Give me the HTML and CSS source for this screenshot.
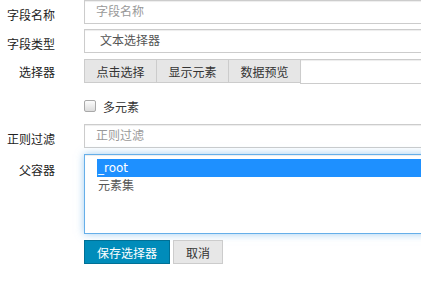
FILE: index.html
```html
<!DOCTYPE html>
<html lang="zh-CN">
<head>
    <meta charset="UTF-8">
    <meta name="viewport" content="width=device-width, initial-scale=1.0">
    <title>选择器编辑</title>
    <link rel="stylesheet" href="styles.css">
</head>
<body>
    <form class="selector-form">
        <div class="row row-first">
            <label class="row-label" for="fieldName">字段名称</label>
            <div class="row-field">
                <input class="text-input" id="fieldName" type="text" placeholder="字段名称">
            </div>
        </div>
        <div class="row row-second">
            <label class="row-label" for="fieldType">字段类型</label>
            <div class="row-field">
                <select class="text-input type-select" id="fieldType">
                    <option>文本选择器</option>
                </select>
            </div>
        </div>
        <div class="row">
            <label class="row-label row-label-tight">选择器</label>
            <div class="row-field btn-group">
                <button type="button" class="tab-btn">点击选择</button>
                <button type="button" class="tab-btn">显示元素</button>
                <button type="button" class="tab-btn">数据预览</button>
                <input class="text-input group-input" type="text">
            </div>
        </div>
        <div class="row row-check">
            <span class="row-label"></span>
            <label class="row-field check-label">
                <input type="checkbox" class="check-box">
                <span>多元素</span>
            </label>
        </div>
        <div class="row">
            <label class="row-label" for="regex">正则过滤</label>
            <div class="row-field">
                <input class="text-input" id="regex" type="text" placeholder="正则过滤">
            </div>
        </div>
        <div class="row">
            <label class="row-label row-label-low">父容器</label>
            <div class="row-field">
                <div class="parent-list">
                    <div class="parent-option selected">_root</div>
                    <div class="parent-option">元素集</div>
                </div>
            </div>
        </div>
        <div class="row">
            <span class="row-label"></span>
            <div class="row-field actions">
                <button type="button" class="btn btn-primary">保存选择器</button>
                <button type="button" class="btn btn-default">取消</button>
            </div>
        </div>
    </form>
</body>
</html>
```

FILE: styles.css
```css
html, body {
    overflow: hidden;
}
body {
    margin: 0;
    background: #fff;
    color: #333;
    font-family: "DejaVu Sans", "Noto Sans CJK SC", sans-serif;
    font-size: 12px;
}
.selector-form {
    width: 640px;
}
.row {
    display: grid;
    grid-template-columns: 55px 1fr;
    column-gap: 29px;
    align-items: start;
    margin-top: 6px;
}
.row-first {
    margin-top: 0;
}
.row-second {
    margin-top: 5px;
}
.row-label {
    box-sizing: border-box;
    height: 24px;
    text-align: right;
    padding-top: 8px;
    line-height: 16px;
    color: #222;
}
.row-label-tight {
    padding-top: 6px;
}
.row-label-low {
    padding-top: 9px;
    height: auto;
}
.row-field {
    display: flex;
    min-width: 0;
}
.text-input {
    box-sizing: border-box;
    width: 100%;
    height: 24px;
    padding: 0 11px;
    border: 1px solid #ccc;
    border-radius: 0;
    background: #fff;
    color: #555;
    font-family: inherit;
    font-size: 12px;
    box-shadow: inset 0 1px 1px rgba(0, 0, 0, .075);
    outline: none;
}
.text-input::placeholder {
    color: #999;
}
.type-select {
    appearance: none;
    padding-left: 15px;
}
.btn-group .tab-btn {
    box-sizing: border-box;
    flex: 0 0 73px;
    height: 24px;
    padding: 0;
    margin-right: -1px;
    border: 1px solid #ccc;
    background: #e6e6e6;
    color: #333;
    font-family: inherit;
    font-size: 12px;
}
.group-input {
    flex: 1;
    height: 25px;
}
.row-check {
    margin-top: 10px;
}
.row-check .row-label {
    padding-top: 0;
}
.check-label {
    align-items: center;
    height: 24px;
    color: #333;
}
.check-box {
    appearance: none;
    box-sizing: border-box;
    width: 12px;
    height: 12px;
    margin: 0 7px 0 0;
    border: 1px solid #a9a9a9;
    border-radius: 2px;
    background: linear-gradient(#fcfcfc, #dcdcdc);
}
.parent-list {
    box-sizing: border-box;
    width: 100%;
    height: 80px;
    padding: 4px 0 0 12px;
    border: 1px solid #66afe9;
    box-shadow: inset 0 1px 1px rgba(0, 0, 0, .075), 0 0 8px rgba(102, 175, 233, .6);
    color: #555;
}
.parent-option {
    height: 18px;
    line-height: 18px;
    padding-left: 1px;
}
.parent-option.selected {
    background: #1e90ff;
    color: #fff;
}
.actions {
    gap: 3px;
}
.btn {
    box-sizing: border-box;
    height: 24px;
    padding: 0 12px;
    border: 1px solid;
    font-family: inherit;
    font-size: 12px;
}
.btn-primary {
    background: #008cba;
    border-color: #007095;
    color: #fff;
}
.btn-default {
    background: #e7e7e7;
    border-color: #ccc;
    color: #333;
}
```
